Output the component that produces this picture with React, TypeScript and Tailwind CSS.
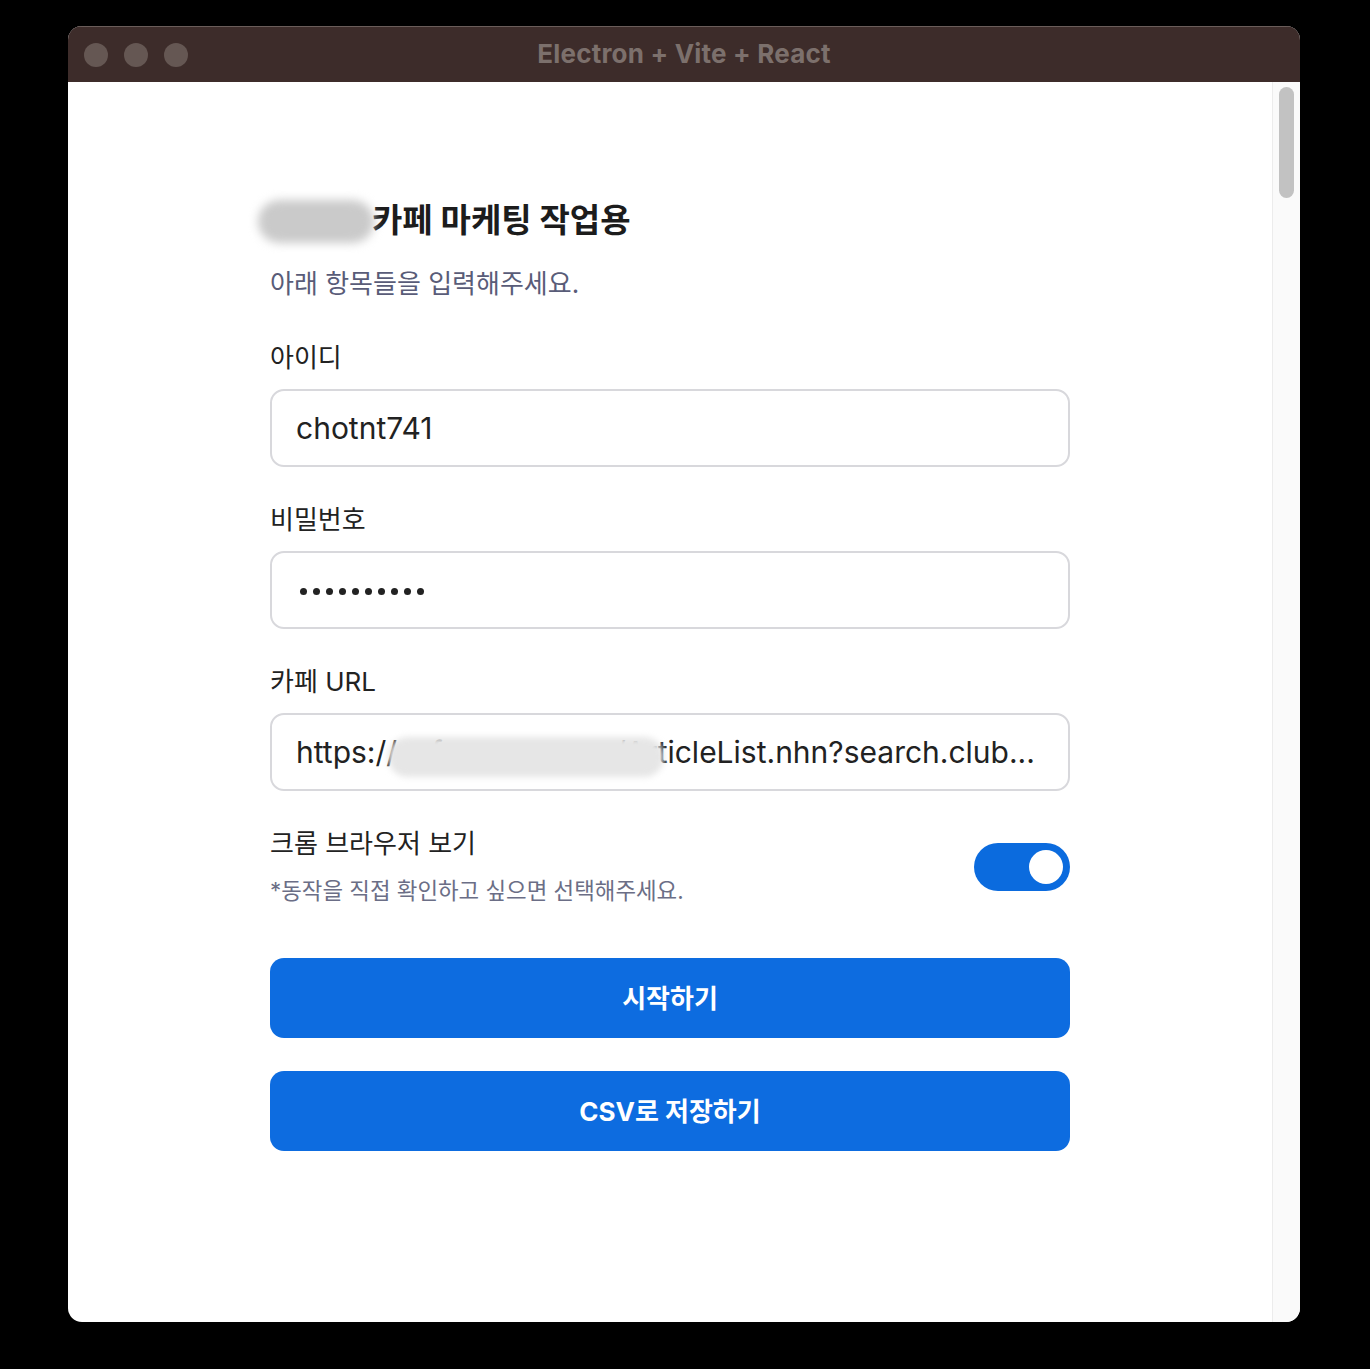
import React from 'react';

const KR = { fontFamily: 'Inter, "Noto Sans CJK KR", sans-serif' };

const Field: React.FC<{ label: string; children: React.ReactNode }> = ({ label, children }) => (
  <div className="flex flex-col">
    <label className="text-[26px] leading-[36px] text-[#222222] mb-[13px]">{label}</label>
    <div className="relative h-[78px] rounded-[14px] border-2 border-[#d8d8dc] bg-white flex items-center px-[24px] overflow-hidden">
      {children}
    </div>
  </div>
);

const App: React.FC = () => {
  return (
    <div className="w-[1370px] h-[1369px] bg-black pt-[26px] pl-[68px]" style={KR}>
      {/* Window */}
      <div className="w-[1232px] h-[1296px] rounded-[14px] overflow-hidden flex flex-col bg-white">
        {/* Title bar */}
        <div className="relative h-[56px] shrink-0 bg-[#3d2c2a] border-t border-[#6a5d5a] flex items-center justify-center">
          <div className="absolute left-[16px] top-0 h-full flex items-center gap-[16px]">
            <span className="w-[24px] h-[24px] rounded-full bg-[#655753]" />
            <span className="w-[24px] h-[24px] rounded-full bg-[#655753]" />
            <span className="w-[24px] h-[24px] rounded-full bg-[#655753]" />
          </div>
          <span className="text-[26px] font-bold text-[#7c706c] tracking-[0.2px] -mt-[3px]">Electron + Vite + React</span>
        </div>

        {/* Body */}
        <div className="flex-1 flex min-h-0">
          <main className="flex-1 flex justify-center">
            <div className="w-[800px] pt-[118px] flex flex-col">
              <h1 className="text-[33px] leading-[40px] font-bold text-[#1c1c1c] flex items-center">
                <span className="relative inline-block w-[102px] h-[40px]">
                  <span className="absolute -left-[12px] -right-[2px] top-0 bottom-[-3px] rounded-full bg-[#cacaca] blur-[5px]" />
                </span>
                카페 마케팅 작업용
              </h1>
              <p className="mt-[26px] text-[26px] leading-[36px] text-[#595c78]">아래 항목들을 입력해주세요.</p>

              <div className="mt-[38px] flex flex-col gap-[35px]">
                <Field label="아이디">
                  <span className="text-[30px] text-[#222222]">chotnt741</span>
                </Field>
                <Field label="비밀번호">
                  <div className="flex items-center gap-[6px] pl-[4px] pt-[2px]">
                    {Array.from({ length: 10 }).map((_, i) => (
                      <span key={i} className="w-[7px] h-[7px] rounded-full bg-[#222222]" />
                    ))}
                  </div>
                </Field>
                <Field label="카페 URL">
                  <span className="text-[30px] text-[#222222] whitespace-nowrap">
                    https://cafe.naver.com/ArticleList.nhn?search.club...
                  </span>
                  <div className="absolute left-[116px] w-[276px] top-[22px] h-[40px] rounded-full bg-[#e6e6e6] blur-[3px]" />
                </Field>

                {/* Toggle row */}
                <div className="flex items-start justify-between">
                  <div className="flex flex-col">
                    <span className="text-[26px] leading-[36px] text-[#222222]">크롬 브라우저 보기</span>
                    <span className="mt-[14px] text-[22.4px] leading-[30px] text-[#6b6e86]">*동작을 직접 확인하고 싶으면 선택해주세요.</span>
                  </div>
                  <button className="mt-[17px] w-[96px] h-[48px] rounded-full bg-[#0b6bde] flex items-center justify-end pr-[7px]">
                    <span className="w-[34px] h-[34px] rounded-full bg-white" />
                  </button>
                </div>
              </div>

              <div className="mt-[52px] flex flex-col gap-[33px]">
                <button className="h-[80px] rounded-[14px] bg-[#0d6ce0] text-white text-[26px] font-bold">시작하기</button>
                <button className="h-[80px] rounded-[14px] bg-[#0d6ce0] text-white text-[26px] font-bold">CSV로 저장하기</button>
              </div>
            </div>
          </main>

          {/* Scrollbar */}
          <div className="w-[28px] shrink-0 bg-[#fafafa] border-l border-[#ececec] flex justify-center pt-[5px]">
            <div className="w-[15px] h-[111px] rounded-full bg-[#c2c2c2]" />
          </div>
        </div>
      </div>
    </div>
  );
};

export default App;
